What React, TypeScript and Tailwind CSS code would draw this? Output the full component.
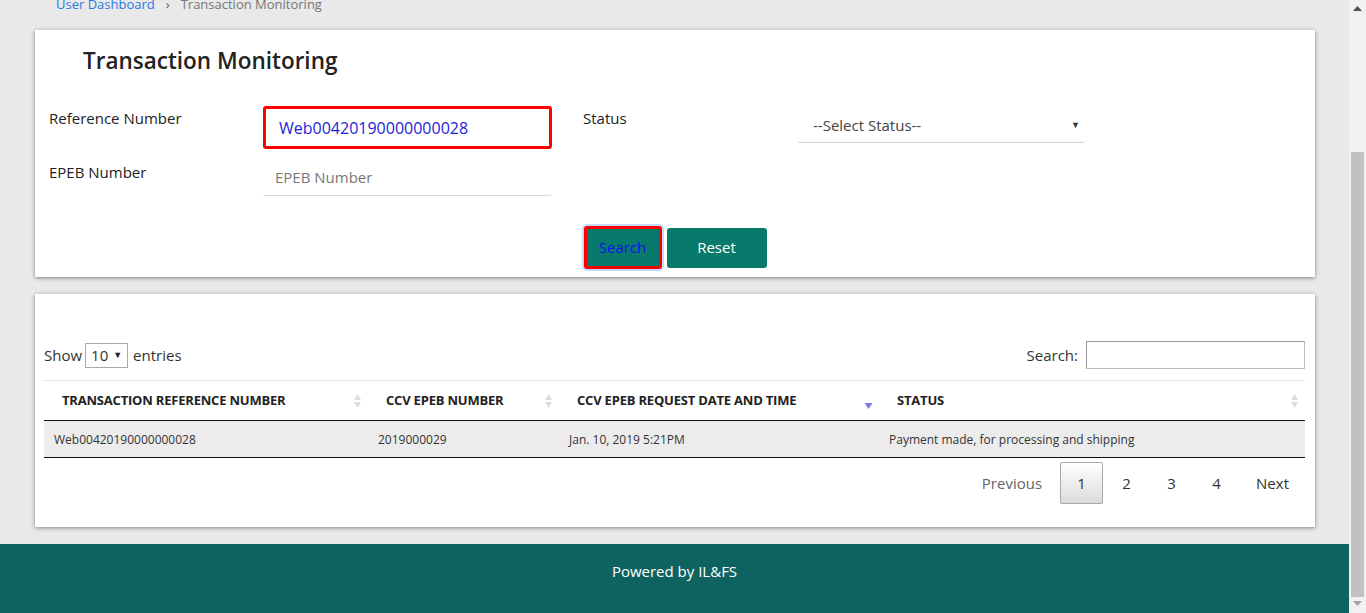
import React from 'react';

const font = { fontFamily: '"Open Sans", "Liberation Sans", sans-serif' };

function SortIcon({ active = false }: { active?: boolean }) {
  if (active) {
    return (
      <svg width="9" height="12" viewBox="0 0 9 12" className="mt-[8px]">
        <path d="M0.5 4 L8.5 4 L4.5 10 Z" fill="#7d7de2" />
      </svg>
    );
  }
  return (
    <svg width="9" height="16" viewBox="0 0 9 16">
      <path d="M4.5 1 L8 7 L1 7 Z" fill="#dcdcdc" />
      <path d="M1 9 L8 9 L4.5 15 Z" fill="#dcdcdc" />
    </svg>
  );
}

export default function App() {
  const columns = [
    { title: 'TRANSACTION REFERENCE NUMBER', width: 'w-[324px]', active: false },
    { title: 'CCV EPEB NUMBER', width: 'w-[191px]', active: false },
    { title: 'CCV EPEB REQUEST DATE AND TIME', width: 'w-[320px]', active: true },
    { title: 'STATUS', width: 'flex-1', active: false },
  ];
  const row = ['Web00420190000000028', '2019000029', 'Jan. 10, 2019 5:21PM', 'Payment made, for processing and shipping'];

  return (
    <div className="flex h-[613px] overflow-hidden bg-[#e9e9e9]" style={font}>
      <div className="flex flex-1 flex-col">
        {/* breadcrumb, page scrolled so it is cut off */}
        <div className="h-[30px] overflow-hidden pl-[56px]">
          <div className="-mt-[5px] flex items-center gap-[11px] text-[13px] leading-[18px]">
            <span className="text-[#2a7ae2]">User Dashboard</span>
            <span className="text-[#555]">›</span>
            <span className="text-[#777]">Transaction Monitoring</span>
          </div>
        </div>

        <div className="px-[35px] pr-[34px]">
          {/* search card */}
          <div className="h-[247px] bg-white px-[14px] pt-[15px] shadow-[0_1px_4px_rgba(0,0,0,0.45)]">
            <h1 className="ml-[34px] text-[22.5px] font-semibold leading-[32px] text-[#222]">Transaction Monitoring</h1>

            <div className="mt-[29px] flex items-start">
              <label className="w-[214px] pt-[1px] text-[15px] leading-[22px] text-[#222]">Reference Number</label>
              <div className="flex h-[43px] w-[289px] items-center rounded-[3px] border-[3px] border-[#ff0000] pl-[13px] text-[16px] text-[#1d1dd8]">
                Web00420190000000028
              </div>
              <label className="ml-[31px] w-[214px] pt-[1px] text-[15px] leading-[22px] text-[#222]">Status</label>
              <div className="mt-[2px] flex h-[35px] w-[288px] items-center justify-between rounded-[3px] border-b border-[#cfd4dc] pl-[16px] pr-[5px] text-[15px] text-[#444]">
                <span>--Select Status--</span>
                <span className="text-[9px] text-[#333]">▼</span>
              </div>
            </div>

            <div className="mt-[11px] flex items-start">
              <label className="w-[214px] pt-[1px] text-[15px] leading-[22px] text-[#222]">EPEB Number</label>
              <div className="flex h-[36px] w-[289px] items-center rounded-[3px] border-b border-[#d8d8d8] pl-[12px] text-[15px] text-[#777]">
                EPEB Number
              </div>
            </div>

            <div className="mt-[30px] flex items-center justify-center gap-[5px]">
              <button className="h-[43px] w-[78px] rounded-[3px] border-[3px] border-[#ff0000] bg-[#077a6c] text-[15px] text-[#1010f0] shadow-[0_0_0_2px_#c2dcf8]">
                Search
              </button>
              <button className="h-[40px] w-[100px] rounded-[3px] bg-[#077a6c] text-[15px] text-white">Reset</button>
            </div>
          </div>

          {/* results card */}
          <div className="mt-[17px] h-[233px] bg-white pl-[9px] pr-[10px] pt-[47px] shadow-[0_1px_4px_rgba(0,0,0,0.45)]">
            <div className="flex items-center justify-between">
              <div className="flex items-center text-[15px] text-[#333]">
                <span>Show</span>
                <div className="ml-[3px] mr-[5px] flex h-[25px] w-[43px] items-center justify-between border border-[#aaa] px-[5px]">
                  <span>10</span>
                  <span className="text-[9px] text-[#222]">▼</span>
                </div>
                <span>entries</span>
              </div>
              <div className="flex items-center text-[15px] text-[#333]">
                <span className="mr-[8px]">Search:</span>
                <div className="h-[28px] w-[219px] border border-[#bdbdbd] border-l-[#999] border-t-[#999]" />
              </div>
            </div>

            <div className="mt-[11px] border-t border-[#e3e3e8]">
              <div className="flex h-[40px] items-center border-b border-[#111]">
                {columns.map((c) => (
                  <div key={c.title} className={`${c.width} flex items-center justify-between pl-[18px] pr-[6px]`}>
                    <span className="text-[13px] font-bold tracking-[-0.2px] text-[#222]">{c.title}</span>
                    <SortIcon active={c.active} />
                  </div>
                ))}
              </div>
              <div className="flex h-[37px] items-center border-b border-[#111] bg-[#ececec]">
                {row.map((v, i) => (
                  <div key={v} className={`${columns[i].width} pl-[10px] pt-[2px] text-[12px] text-[#333]`}>
                    {v}
                  </div>
                ))}
              </div>
            </div>

            <div className="mt-[4px] flex justify-end text-[15px]">
              {['Previous', '1', '2', '3', '4', 'Next'].map((p) => (
                <div
                  key={p}
                  className={
                    p === '1'
                      ? 'ml-[2px] flex h-[42px] min-w-[43px] items-center justify-center rounded-[2px] border border-[#a9a9a9] bg-gradient-to-b from-white to-[#dcdcdc] px-[15px] text-[#333]'
                      : p === 'Previous'
                      ? 'ml-[2px] flex h-[42px] min-w-[43px] items-center justify-center border border-transparent px-[15px] text-[#666]'
                      : 'ml-[2px] flex h-[42px] min-w-[43px] items-center justify-center border border-transparent px-[15px] text-[#333]'
                  }
                >
                  {p}
                </div>
              ))}
            </div>
          </div>
        </div>

        <footer className="mt-[17px] flex-1 bg-[#0e6360] pt-[16px] text-center text-[15px] leading-[22px] text-white">
          Powered by IL&amp;FS
        </footer>
      </div>

      {/* browser scrollbar */}
      <div className="flex w-[17px] flex-col items-center bg-[#f1f1f1]">
        <svg width="9" height="5" viewBox="0 0 9 5" className="mt-[6px]">
          <path d="M4.5 0 L9 5 L0 5 Z" fill="#505050" />
        </svg>
        <div className="mt-[141px] h-[445px] w-[13px] bg-[#c1c1c1]" />
        <svg width="9" height="5" viewBox="0 0 9 5" className="mt-[4px]">
          <path d="M0 0 L9 0 L4.5 5 Z" fill="#a3a3a3" />
        </svg>
      </div>
    </div>
  );
}
